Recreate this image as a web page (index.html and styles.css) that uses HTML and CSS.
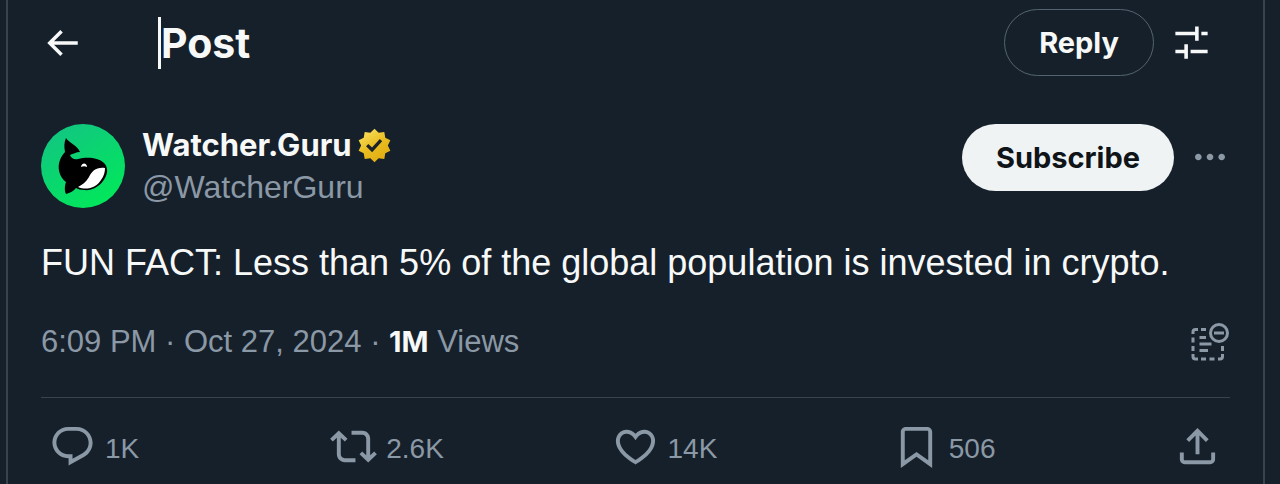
FILE: index.html
```
<!DOCTYPE html>
<html lang="en">
<head>
    <meta charset="UTF-8">
    <meta name="viewport" content="width=device-width, initial-scale=1.0">
    <title>Post</title>
    <link rel="stylesheet" href="styles.css">
</head>
<body>
    <main class="column">
        <header class="topbar">
            <button class="icon-btn" aria-label="Back">
                <svg class="icon-back" viewBox="0 0 24 24"><path d="M7.414 13l5.043 5.04-1.414 1.42L3.586 12l7.457-7.46 1.414 1.42L7.414 11H21v2H7.414z"/></svg>
            </button>
            <h1 class="title">Post</h1>
            <button class="btn btn-outline">Reply</button>
            <button class="icon-btn" aria-label="Settings">
                <svg class="icon-settings" viewBox="0 0 24 24"><path d="M14 6V3h2v8h-2V8H3V6h11zm7 2h-3.5V6H21v2zM8 16v-3h2v8H8v-3H3v-2h5zm13 2h-9.5v-2H21v2z"/></svg>
            </button>
        </header>

        <article class="post">
            <div class="author">
                <svg class="avatar" viewBox="0 0 84 84" role="img" aria-label="Watcher.Guru">
                    <defs>
                        <linearGradient id="green" x1="0" y1="0" x2="0.6" y2="1">
                            <stop offset="0" stop-color="#14c286"/>
                            <stop offset="1" stop-color="#02e65c"/>
                        </linearGradient>
                    </defs>
                    <circle cx="42" cy="42" r="42" fill="url(#green)"/>
                    <path d="M25 14C28 19 36 21 39 28C35 28 32 30 29 31C30 34 33 36 37 35C45 33 57 33 63 39C67 43 67 49 64 54C60 62 51 67 43 66C40 66 37 65 35 64C33 67 29 69 25 70C23 66 24 61 25 58C18 53 16 43 19 36C20 33 22 30 24 28C23 23 23 18 25 14z" fill="#000"/>
                    <path d="M64 44C55 43 51 47 48 53C45 58 41 61 37 63C46 67 56 63 60 56C63 52 64 48 64 44z" fill="#fff"/>
                    <path d="M40 43C41 38 46 39 46 43C44 42 42 42 40 43z" fill="#fff"/>
                </svg>
                <div class="names">
                    <a class="name" href="#">Watcher.Guru
                        <svg class="badge" viewBox="0 0 22 22" role="img" aria-label="Verified">
                            <defs>
                                <linearGradient id="gold" x1="0.2" y1="0" x2="0.8" y2="1">
                                    <stop offset="0" stop-color="#f9e05f"/>
                                    <stop offset="0.5" stop-color="#e9bd20"/>
                                    <stop offset="1" stop-color="#e0aa10"/>
                                </linearGradient>
                            </defs>
                            <path d="M13.324 3.848L11 1.6 8.676 3.848l-3.201-.453-.559 3.184L2.06 8.095 3.48 11l-1.42 2.904 2.856 1.516.559 3.184 3.201-.452L11 20.4l2.324-2.248 3.201.453.559-3.184 2.856-1.516L18.52 11l1.42-2.905-2.856-1.516-.559-3.184z" fill="url(#gold)"/>
                            <path d="M6.234 11.423l3.428 3.428 5.683-6.206-1.347-1.247-4.4 4.795-2.072-2.072z" fill="#1c2229"/>
                        </svg>
                    </a>
                    <a class="handle" href="#">@WatcherGuru</a>
                </div>
                <button class="btn btn-light">Subscribe</button>
                <button class="icon-btn muted" aria-label="More">
                    <svg class="icon-more" viewBox="0 0 24 24"><path d="M3 12c0-1.1.9-2 2-2s2 .9 2 2-.9 2-2 2-2-.9-2-2zm9 2c1.1 0 2-.9 2-2s-.9-2-2-2-2 .9-2 2 .9 2 2 2zm7 0c1.1 0 2-.9 2-2s-.9-2-2-2-2 .9-2 2 .9 2 2 2z"/></svg>
                </button>
            </div>

            <p class="text">FUN FACT: Less than 5% of the global population is invested in crypto.</p>

            <div class="meta">
                <p><a href="#">6:09 PM · Oct 27, 2024</a> · <strong>1M</strong> Views</p>
                <button class="icon-btn muted" aria-label="Hide note">
                    <svg class="icon-note" viewBox="0 0 40 40">
                        <g fill="none" stroke="currentColor" stroke-width="3">
                            <path d="M3 12V10Q3 7.500 5.500 7.500H8M11 7.500H16M3 15.500V20.500M3 24V29M3 32V34.500Q3 37 5.500 37H8M11 37H16M19.500 37H24.500M28 37H30Q32.500 37 32.500 34.500V32M32.500 24V29"/>
                            <path d="M9.500 15.500H16M9.500 22H21.500M9.500 28.500H18"/>
                            <circle cx="29" cy="11" r="8.500"/>
                            <path d="M24 11H34"/>
                        </g>
                    </svg>
                </button>
            </div>

            <div class="actions">
                <button class="action" aria-label="1K replies">
                    <svg viewBox="0 0 24 24"><path d="M1.751 10c0-4.42 3.584-8 8.005-8h4.366c4.49 0 8.129 3.64 8.129 8.13 0 2.96-1.607 5.68-4.196 7.11l-8.054 4.46v-3.69h-.067c-4.49.1-8.183-3.51-8.183-8.01zm8.005-6c-3.317 0-6.005 2.69-6.005 6 0 3.37 2.77 6.08 6.138 6.01l.351-.01h1.761v2.3l5.087-2.81c1.951-1.08 3.163-3.13 3.163-5.36 0-3.39-2.744-6.13-6.129-6.13H9.756z"/></svg>
                    <span>1K</span>
                </button>
                <button class="action" aria-label="2.6K reposts">
                    <svg viewBox="0 0 24 24"><path d="M4.5 3.88l4.432 4.14-1.364 1.46L5.5 7.55V16c0 1.1.896 2 2 2H13v2H7.5c-2.209 0-4-1.79-4-4V7.55L1.432 9.48.068 8.02 4.5 3.88zM16.5 6H11V4h5.5c2.209 0 4 1.79 4 4v8.45l2.068-1.93 1.364 1.46-4.432 4.14-4.432-4.14 1.364-1.46 2.068 1.93V8c0-1.1-.896-2-2-2z"/></svg>
                    <span>2.6K</span>
                </button>
                <button class="action" aria-label="14K likes">
                    <svg viewBox="0 0 24 24"><path d="M16.697 5.5c-1.222-.06-2.679.51-3.89 2.16l-.805 1.09-.806-1.09C9.984 6.01 8.526 5.44 7.304 5.5c-1.243.07-2.349.78-2.91 1.91-.552 1.12-.633 2.78.479 4.82 1.074 1.97 3.257 4.27 7.129 6.61 3.87-2.34 6.052-4.64 7.126-6.61 1.111-2.04 1.03-3.7.477-4.82-.561-1.13-1.666-1.84-2.908-1.91zm4.187 7.69c-1.351 2.48-4.001 5.12-8.379 7.67l-.503.3-.504-.3c-4.379-2.55-7.029-5.19-8.382-7.67-1.36-2.5-1.41-4.86-.514-6.67.887-1.79 2.647-2.91 4.601-3.01 1.651-.09 3.368.56 4.798 2.01 1.429-1.45 3.146-2.1 4.796-2.01 1.954.1 3.714 1.22 4.601 3.01.896 1.81.846 4.17-.514 6.67z"/></svg>
                    <span>14K</span>
                </button>
                <button class="action" aria-label="506 bookmarks">
                    <svg viewBox="0 0 24 24"><path d="M4 4.500C4 3.120 5.119 2 6.500 2h11C18.881 2 20 3.120 20 4.500v18.440l-8-5.710-8 5.710V4.500zM6.500 4c-.276 0-.5.22-.5.5v14.560l6-4.290 6 4.290V4.500c0-.28-.224-.5-.5-.5h-11z"/></svg>
                    <span>506</span>
                </button>
                <button class="action" aria-label="Share">
                    <svg viewBox="0 0 24 24"><path d="M12 2.590l5.700 5.700-1.410 1.420L13 6.410V16h-2V6.410l-3.300 3.300-1.410-1.420L12 2.590zM21 15l-.02 3.510c0 1.380-1.120 2.490-2.500 2.490H5.500C4.110 21 3 19.880 3 18.500V15h2v3.500c0 .28.22.5.5.5h12.980c.28 0 .5-.22.5-.5L19 15h2z"/></svg>
                </button>
            </div>
        </article>
    </main>
</body>
</html>
```
FILE: styles.css
```
* {
    box-sizing: border-box;
}
body {
    margin: 0;
    background: #16202b;
    color: #f7f9f9;
    font-family: "Liberation Sans", Arial, sans-serif;
    font-size: 32px;
    line-height: 42px;
}
h1, p {
    margin: 0;
}
a {
    color: inherit;
    text-decoration: none;
}
button {
    padding: 0;
    border: none;
    background: none;
    color: inherit;
    font: inherit;
    cursor: pointer;
}
svg {
    display: block;
    fill: currentColor;
}
.column {
    min-height: 100vh;
    margin: 0 15px 0 6px;
    border: solid #38444d;
    border-width: 0 2px;
}
.muted {
    color: #8b98a5;
}
.title, .name, .btn, .meta strong {
    font-family: Inter, Arial, sans-serif;
    font-weight: 700;
}

/* top bar */
.topbar {
    display: flex;
    align-items: center;
    padding: 9px 50px 0 33px;
}
.title {
    margin: 0 auto 0 75px;
    border-left: 3px solid #f7f9f9;
    font-size: 41px;
    line-height: 52px;
}
.icon-back {
    width: 42px;
    height: 42px;
}
.icon-settings {
    width: 43px;
    height: 43px;
}
.btn {
    height: 67px;
    padding: 0 34px;
    border-radius: 34px;
    font-size: 29px;
}
.btn-outline {
    margin-right: 16px;
    border: 1px solid #536471;
}
.btn-light {
    background: #eff3f4;
    color: #0f1419;
}

/* post */
.post {
    padding: 48px 33px 0;
}
.author {
    display: flex;
    align-items: flex-start;
}
.author .icon-btn {
    margin-left: 16px;
    padding: 13px 0;
}
.avatar {
    width: 84px;
    height: 84px;
    margin-right: 17px;
}
.names {
    display: flex;
    flex-direction: column;
    margin-right: auto;
}
.name {
    display: flex;
    align-items: center;
    gap: 3px;
    font-size: 31px;
}
.handle {
    color: #8b98a5;
}
.badge {
    width: 39px;
    height: 39px;
}
.icon-more {
    width: 40px;
    height: 40px;
}
.text {
    margin-top: 30px;
    font-size: 36px;
    line-height: 50px;
}
.meta {
    display: flex;
    align-items: center;
    justify-content: space-between;
    padding: 33px 0 34px;
    border-bottom: 1px solid #38444d;
    color: #8b98a5;
    font-size: 31px;
}
.meta strong {
    color: #f7f9f9;
    font-size: 29px;
}
.icon-note {
    width: 40px;
    height: 40px;
}
.actions {
    display: flex;
    padding: 25px 9px 12px 8px;
    color: #8b98a5;
    font-size: 28px;
}
.action {
    display: flex;
    flex: 1;
    align-items: center;
    gap: 9px;
}
.action:last-child {
    flex: none;
}
.action span {
    padding-top: 4px;
}
.action svg {
    width: 47px;
    height: 47px;
}
```
